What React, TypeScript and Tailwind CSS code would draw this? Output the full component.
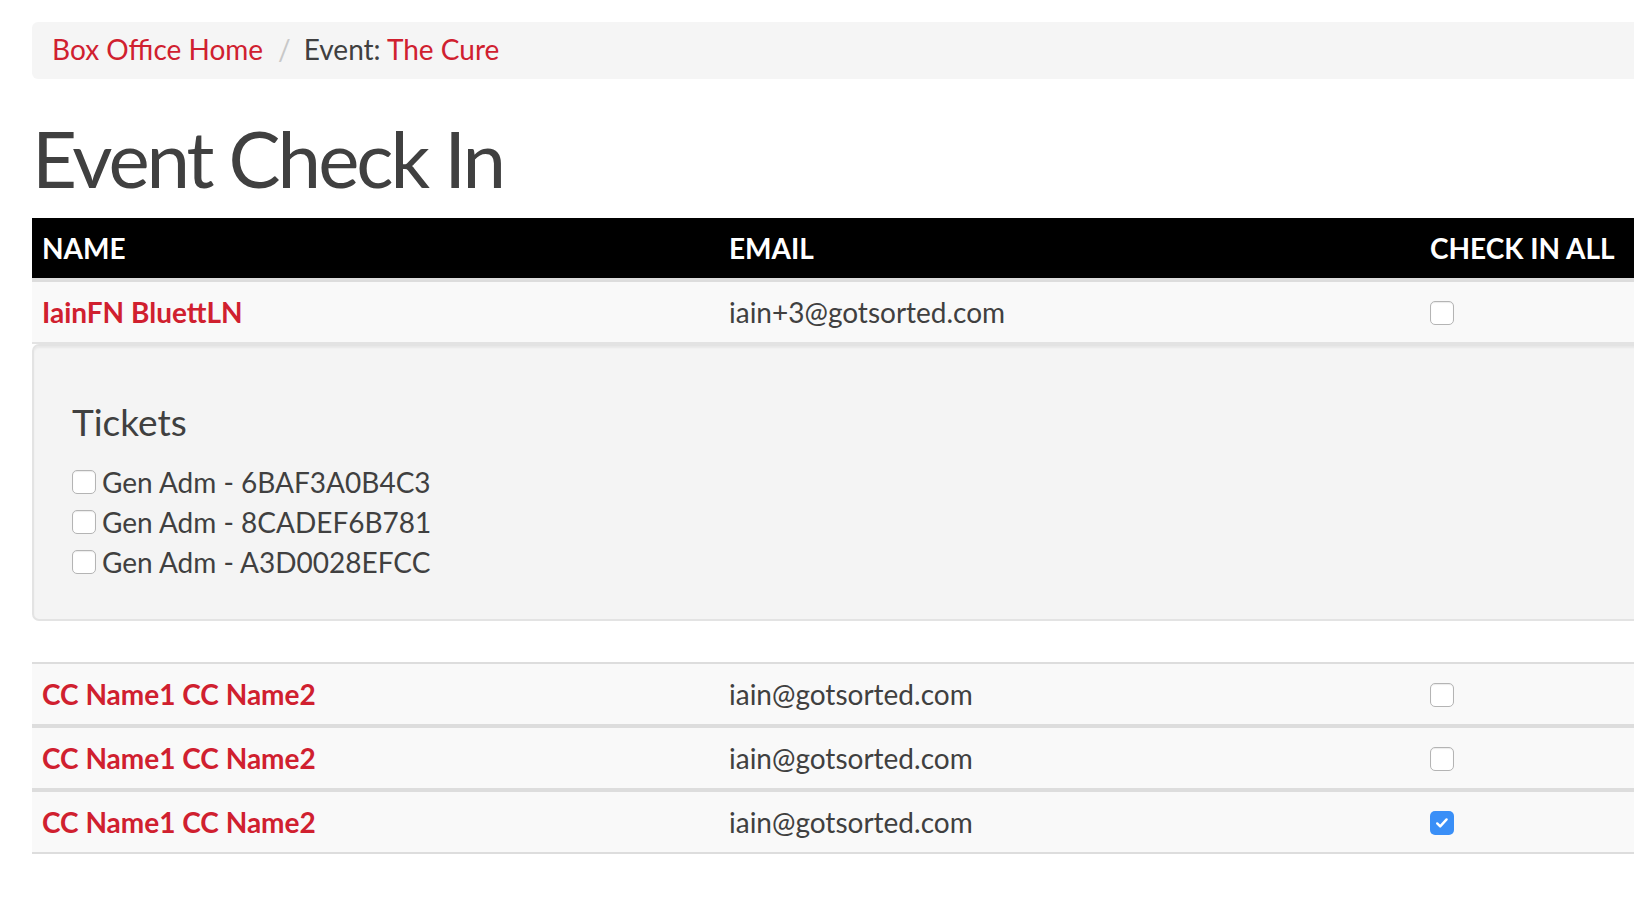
import React from "react";

const red = "text-[#d0202f]";

const Box = ({ checked = false }: { checked?: boolean }) =>
  checked ? (
    <span className="flex h-[24px] w-[24px] shrink-0 items-center justify-center rounded-[5px] bg-[#3a8ff7]">
      <svg viewBox="0 0 16 16" className="h-[16px] w-[16px]">
        <path
          d="M3.2 8.4l3 3 6.4-7"
          fill="none"
          stroke="white"
          strokeWidth="2.4"
          strokeLinecap="round"
          strokeLinejoin="round"
        />
      </svg>
    </span>
  ) : (
    <span className="block h-[24px] w-[24px] shrink-0 rounded-[5px] border-[1.5px] border-[#b4b4b4] bg-white shadow-[inset_0_1px_1px_rgba(0,0,0,0.08)]" />
  );

const Row = ({
  name,
  email,
  checked,
}: {
  name: string;
  email: string;
  checked?: boolean;
}) => (
  <div className="flex h-[60px] items-center bg-[#f9f9f9]">
    <div className={`w-[687px] pl-[10px] font-bold ${red}`}>{name}</div>
    <div className="w-[711px] pl-[10px]">{email}</div>
    <div className="pt-[2px]">
      <Box checked={checked} />
    </div>
  </div>
);

const tickets = [
  "Gen Adm - 6BAF3A0B4C3",
  "Gen Adm - 8CADEF6B781",
  "Gen Adm - A3D0028EFCC",
];

const others = [
  { name: "CC Name1 CC Name2", email: "iain@gotsorted.com" },
  { name: "CC Name1 CC Name2", email: "iain@gotsorted.com" },
  { name: "CC Name1 CC Name2", email: "iain@gotsorted.com", checked: true },
];

export default function App() {
  return (
    <div className="min-h-screen overflow-hidden bg-white font-['Lato','Liberation_Sans',sans-serif] text-[28px] text-[#404040]">
      <div className="w-[1760px] pl-[32px] pt-[22px]">
        {/* Breadcrumb */}
        <div className="flex h-[57px] items-center rounded-[6px] bg-[#f5f5f5] pb-[3px] pl-[20px]">
          <span className={red}>Box Office Home</span>
          <span className="pl-[15px] pr-[13px] text-[#c8c8c8]">/</span>
          <span>
            Event: <span className={red}>The Cure</span>
          </span>
        </div>

        {/* Heading */}
        <h1 className="mt-[40px] text-[78px] leading-[78px] tracking-[-3px]">
          Event Check In
        </h1>

        {/* Table */}
        <div className="mt-[21px]">
          <div className="flex h-[60px] items-center bg-black pb-[1px] font-bold text-white">
            <div className="w-[687px] pl-[10px]">NAME</div>
            <div className="w-[711px] pl-[10px]">EMAIL</div>
            <div>CHECK IN ALL</div>
          </div>
          <div className="h-[4px] bg-[#dddddd]" />
          <Row name="IainFN BluettLN" email="iain+3@gotsorted.com" />
          <div className="h-[2px] bg-[#e3e3e3]" />

          {/* Tickets well */}
          <div className="h-[277px] rounded-[7px] border-2 border-[#e3e3e3] bg-[#f4f4f4] pl-[38px] pt-[56px] shadow-[inset_0_2px_2px_rgba(0,0,0,0.05)]">
            <h3 className="text-[37px] leading-[40px]">Tickets</h3>
            <div className="mt-[20px]">
              {tickets.map((t) => (
                <div key={t} className="flex h-[40px] items-center gap-[6px]">
                  <Box />
                  <span>{t}</span>
                </div>
              ))}
            </div>
          </div>

          <div className="mt-[41px]">
            <div className="h-[2px] bg-[#dddddd]" />
            {others.map((o, i) => (
              <div key={i}>
                <Row name={o.name} email={o.email} checked={o.checked} />
                <div
                  className={
                    i < others.length - 1
                      ? "h-[4px] bg-[#dddddd]"
                      : "h-[2px] bg-[#dddddd]"
                  }
                />
              </div>
            ))}
          </div>
        </div>
      </div>
    </div>
  );
}
